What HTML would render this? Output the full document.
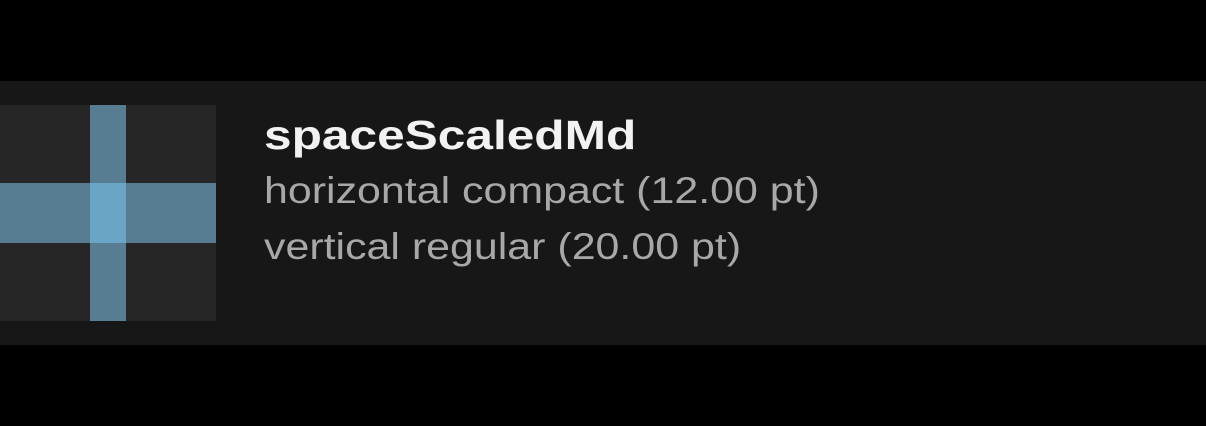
<!DOCTYPE html>
<html><head><style>
html,body{margin:0;padding:0;background:#000;width:1206px;height:426px;overflow:hidden}
.panel{position:absolute;left:0;top:81px;width:1206px;height:264px;background:#171717}
.sq{position:absolute;left:0;top:105px;width:216px;height:216px;background:#262626}
.v{position:absolute;left:90px;top:105px;width:36px;height:216px;background:#587d93}
.h{position:absolute;left:0;top:183px;width:216px;height:60px;background:#587d93}
.c{position:absolute;left:90px;top:183px;width:36px;height:60px;background:#6ba5c6}
.t{position:absolute;left:264px;font-family:"Liberation Sans",sans-serif;white-space:nowrap;transform-origin:0 0}
.t1{top:112px;font-size:41px;font-weight:bold;color:#f2f2f2;transform:scaleX(1.21)}
.t2{top:170px;font-size:37px;color:#a8a8a8;transform:scaleX(1.16)}
.t3{top:226px;font-size:37px;color:#a8a8a8;transform:scaleX(1.16)}
</style></head><body>
<div class="panel"></div>
<div class="sq"></div><div class="v"></div><div class="h"></div><div class="c"></div>
<div class="t t1">spaceScaledMd</div>
<div class="t t2">horizontal compact (12.00 pt)</div>
<div class="t t3">vertical regular (20.00 pt)</div>
</body></html>
